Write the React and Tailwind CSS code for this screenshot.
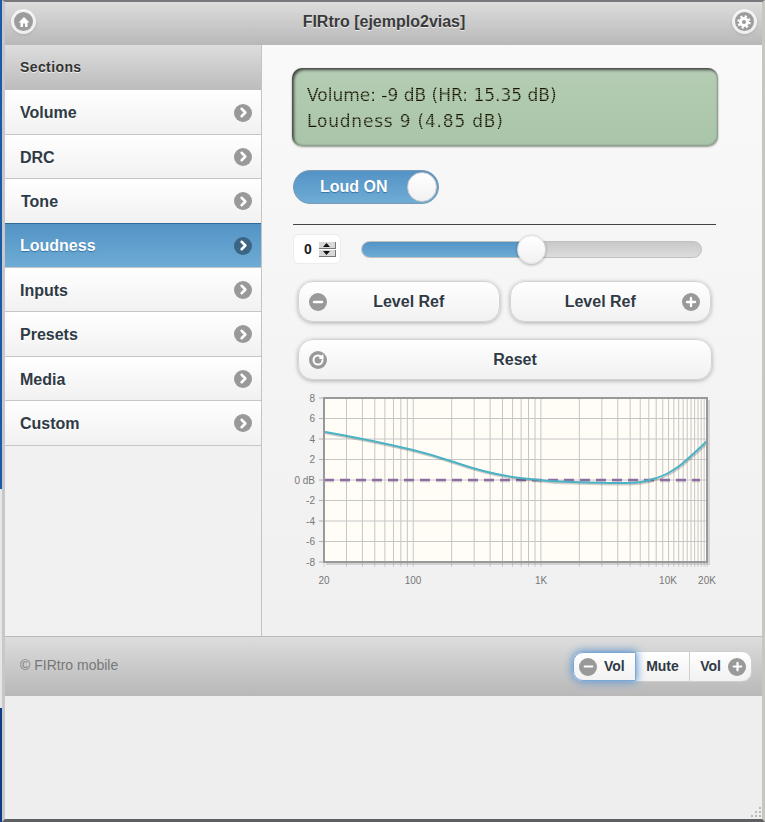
import { ChevronRight, Minus, Plus, RotateCw } from 'lucide-react'

const SECTIONS = ['Volume', 'DRC', 'Tone', 'Loudness', 'Inputs', 'Presets', 'Media', 'Custom']
const ROW_H = { Volume: 'h-[45px] pt-px', DRC: 'h-[44px]', Tone: 'h-[45px]', Loudness: 'h-[44px]', Inputs: 'h-[44px]', Presets: 'h-[45px]', Media: 'h-[44px]', Custom: 'h-[45px]' }

function IconDot({ children, dark }) {
  return (
    <span className={`flex h-[18px] w-[18px] flex-shrink-0 items-center justify-center rounded-full text-white ${dark ? 'bg-[#3b6485]' : 'bg-[#999999]'}`}>
      {children}
    </span>
  )
}

function HeadIcon({ children }) {
  return (
    <span className="flex h-[19px] w-[19px] items-center justify-center rounded-full bg-[#9c9c9c] text-white shadow-[0_0_0_3px_rgba(255,255,255,0.8),0_1px_3px_3px_rgba(0,0,0,0.1)]">
      {children}
    </span>
  )
}

function SectionRow({ label }) {
  const active = label === 'Loudness'
  const border = label === 'Tone' ? 'border-[#2f6a98]' : 'border-[#c6c6c6]'
  return (
    <div className={`flex ${ROW_H[label]} items-center justify-between border-b ${border} pl-[15px] pr-[9px] text-[16px] font-bold ${active ? 'bg-gradient-to-b from-[#5393c5] to-[#6facd5] text-white [text-shadow:0_1px_1px_#3373a5]' : 'bg-gradient-to-b from-white to-[#f1f1f1] text-[#2f3a45] [text-shadow:0_1px_0_#fff]'}`}>
      <span className={`${label === 'Tone' ? 'pl-px' : ''} ${active || label === 'Volume' ? '' : 'pt-[2px]'}`}>{label}</span>
      <IconDot dark={active}>
        <ChevronRight size={15} strokeWidth={4} />
      </IconDot>
    </div>
  )
}

function PillButton({ children, icon, side = 'left' }) {
  return (
    <div className={`relative flex h-[41px] flex-1 items-center justify-center rounded-[15px] border border-[#d4d4d4] bg-gradient-to-b from-white to-[#f1f1f1] text-[16px] font-bold text-[#2f3a45] shadow-[0_1px_4px_rgba(0,0,0,0.3)] [text-shadow:0_1px_0_#fff] ${side === 'left' ? 'pl-[20px]' : 'pr-[20px]'}`}>
      <span className={side === 'left' ? 'absolute left-[10px] top-[11px]' : 'absolute right-[10px] top-[11px]'}>
        <IconDot>{icon}</IconDot>
      </span>
      {children}
    </div>
  )
}

function StepArrow({ up }) {
  return (
    <span className="flex h-[7px] w-[17px] items-center justify-center border-b border-r border-[#777777] bg-[#d8d8d8]">
      <svg width="7" height="4" viewBox="0 0 7 4" fill="#111111"><path d={up ? 'M3.5 0 L7 4 H0 Z' : 'M0 0 H7 L3.5 4 Z'} /></svg>
    </span>
  )
}

// log frequency grid lines of the eq chart
const FREQS = [20, 30, 40, 50, 60, 70, 80, 90, 100, 200, 300, 400, 500, 600, 700, 800, 900, 1000, 2000, 3000, 4000, 5000, 6000, 7000, 8000, 9000, 10000, 11000, 12000, 13000, 14000, 15000, 16000, 17000, 18000, 19000, 20000]
const fx = f => (Math.log10(f / 20) / 3) * 383
const gy = d => 82 - d * 10.25

function EqChart() {
  const curve = 'M0 33.7 C30 39 60 45 89 52 C105 56 118 60 129 63.7 C150 71 172 77 196 80 C215 82.5 235 84 255 84.3 C275 85 290 85.3 303 85 C312 85 322 83.5 329 81 C336 79 341 77 346 74 C351 71 355 68.5 359 65 C367 58 375 51 383 43'
  return (
    <svg width="424" height="200" viewBox="-30 -8 424 200" className="block">
      <rect x="0" y="0" width="383" height="164" fill="#fffdf6" />
      {FREQS.map(f => <line key={f} x1={fx(f)} x2={fx(f)} y1="0" y2="164" stroke="#c6c6c6" strokeWidth="1" />)}
      {FREQS.map(f => <line key={`t${f}`} x1={fx(f)} x2={fx(f)} y1="164" y2="169" stroke="#d0d0d0" strokeWidth="1" />)}
      {[8, 6, 4, 2, 0, -2, -4, -6, -8].map(d => (
        <g key={d}>
          <line x1="0" x2="383" y1={gy(d)} y2={gy(d)} stroke="#c6c6c6" strokeWidth="1" />
          <line x1="-5" x2="0" y1={gy(d)} y2={gy(d)} stroke="#b0b0b0" strokeWidth="1" />
          <text x="-9" y={gy(d) + 3.5} textAnchor="end" fontSize="10" fontFamily="Liberation Sans" fill="#777777">{d === 0 ? '0 dB' : d}</text>
        </g>
      ))}
      <line x1="0" x2="376" y1="83.5" y2="83.5" stroke="#00000018" strokeWidth="2" strokeDasharray="10 6" />
      <line x1="0" x2="376" y1="82" y2="82" stroke="#8c6ea3" strokeWidth="2.5" strokeDasharray="10 6" />
      <path d={curve} fill="none" stroke="#00000030" strokeWidth="2" transform="translate(1 1.5)" />
      <path d={curve} fill="none" stroke="#4bb2c5" strokeWidth="2" />
      <path d="M385 2 V166 H2" fill="none" stroke="#00000020" strokeWidth="2" />
      <rect x="0" y="0" width="383" height="164" fill="none" stroke="#999999" strokeWidth="2" />
      {[['20', 0], ['100', 89], ['1K', 217], ['10K', 344], ['20K', 383]].map(([t, x]) => (
        <text key={t} x={x} y="186" textAnchor="middle" fontSize="10" fontFamily="Liberation Sans" fill="#777777">{t}</text>
      ))}
    </svg>
  )
}

export default function App() {
  return (
    <div className="flex h-[822px] w-[765px] overflow-hidden font-['Liberation_Sans',sans-serif]">
      {/* sliver of the window behind the frame */}
      <div className="flex w-[2px] flex-shrink-0 flex-col">
        <div className="h-[489px] bg-[#1a5aa8]" />
        <div className="h-[219px] bg-[#e6e6e6]" />
        <div className="flex-1 bg-[#0d3b8c]" />
      </div>
      <div className="flex min-w-0 flex-1 flex-col border-t-2 border-b-[3px] border-l-[3px] border-r-[3px] border-t-[#77797d] border-b-[#5d5f60] border-l-[#c8c8c8] border-r-[#c8c6c0] bg-[#eeeeee]">
        <header className="flex h-[43px] flex-shrink-0 items-center justify-between bg-gradient-to-b from-[#dddddd] to-[#b8b8b8] pb-[4px] pl-[9px] pr-[8px]">
          <HeadIcon>
            <svg width="12" height="12" viewBox="0 0 24 24" fill="currentColor"><path d="M12 2 L23 13 H19 V22 H14 V15 H10 V22 H5 V13 H1 Z" /></svg>
          </HeadIcon>
          <span className="text-[16px] font-bold text-[#3a3a3a] [text-shadow:0_1px_0_#eee]">FIRtro [ejemplo2vias]</span>
          <HeadIcon>
            <svg width="14" height="14" viewBox="0 0 24 24" fill="none" stroke="currentColor">
              <circle cx="12" cy="12" r="6" strokeWidth="5" />
              <circle cx="12" cy="12" r="9.5" strokeWidth="4" strokeDasharray="3.7 3.76" />
            </svg>
          </HeadIcon>
        </header>

        <div className="flex h-[592px] flex-shrink-0 border-b border-[#b9b9b9]">
          <nav className="w-[257px] flex-shrink-0 border-r border-[#c4c4c4] bg-[#f1f1f1]">
            <div className="flex h-[45px] items-center bg-gradient-to-b from-[#dddddd] to-[#bcbcbc] pl-[15px] text-[14px] font-bold tracking-[0.4px] text-[#333333] [text-shadow:0_1px_0_#eee]">Sections</div>
            {SECTIONS.map(s => <SectionRow key={s} label={s} />)}
          </nav>

          <main className="min-w-0 flex-1 bg-gradient-to-b from-[#f9f9f9] to-[#f0f0f0] pl-[30px] pr-[44px] pt-[23px]">
            <div className="flex h-[78px] flex-col justify-center gap-[3px] rounded-[10px] bg-gradient-to-b from-[#b4cdb4] to-[#a9c5a9] pl-[15px] pt-[2px] font-['DejaVu_Sans',sans-serif] text-[17px] leading-[23px] shadow-[inset_2px_2px_3px_#444,inset_-1px_-1px_2px_#8a9a8a,0_1px_2px_rgba(0,0,0,0.4)]">
              <div className="w-fit bg-[repeating-linear-gradient(180deg,#1a1505_0_1px,#5f6a4c_1px_2px)] bg-clip-text text-transparent">Volume: -9 dB (HR: 15.35 dB)</div>
              <div className="w-fit bg-[repeating-linear-gradient(180deg,#1a1505_0_1px,#5f6a4c_1px_2px)] bg-clip-text tracking-[0.8px] text-transparent">Loudness 9 (4.85 dB)</div>
            </div>

            <div className="ml-[1px] mt-[24px] flex h-[34px] w-[146px] items-center justify-between rounded-full border border-[#7b99b3] bg-gradient-to-b from-[#5393c5] to-[#6facd5] pl-[26px] pr-[1px] text-[16px] font-bold text-white [text-shadow:0_1px_1px_#3373a5]">
              Loud ON
              <span className="h-[30px] w-[30px] rounded-full border border-[#c8c8c8] bg-gradient-to-b from-white to-[#f1f1f1]" />
            </div>

            <hr className="ml-[1px] mr-[2px] mt-[20px] border-t border-[#444444]" />

            <div className="ml-[1px] mr-[16px] mt-[9px] flex items-center">
              <div className="flex h-[30px] w-[48px] items-center justify-center gap-[7px] rounded-[6px] border border-[#ececec] bg-white pl-[6px] text-[14px] font-bold text-[#222222]">
                0
                <span className="flex flex-col gap-px">
                  <StepArrow up />
                  <StepArrow />
                </span>
              </div>
              <div className="relative ml-[20px] h-[17px] flex-1 rounded-full border border-[#c0c0c0] bg-gradient-to-b from-[#c8c8c8] to-[#dddddd]">
                <div className="h-full w-[170px] rounded-full bg-gradient-to-b from-[#5393c5] to-[#6facd5]" />
                <span className="absolute left-[155px] top-[-7px] h-[29px] w-[29px] rounded-full border border-[#dddddd] bg-gradient-to-b from-white to-[#f1f1f1] shadow-[0_1px_3px_rgba(0,0,0,0.3)]" />
              </div>
            </div>

            <div className="ml-[6px] mr-[7px] mt-[17px] flex gap-[10px]">
              <PillButton icon={<Minus size={14} strokeWidth={4} />}>Level Ref</PillButton>
              <PillButton side="right" icon={<Plus size={14} strokeWidth={4} />}>Level Ref</PillButton>
            </div>
            <div className="ml-[6px] mr-[6px] mt-[17px] flex">
              <PillButton icon={<RotateCw size={12} strokeWidth={4} />}>Reset</PillButton>
            </div>

            <div className="ml-[2px] mt-[10px]">
              <EqChart />
            </div>
          </main>
        </div>

        <footer className="flex h-[59px] flex-shrink-0 items-center justify-between bg-gradient-to-b from-[#dddddd] to-[#b8b8b8] pl-[15px] pr-[10px]">
          <span className="mb-[2px] text-[14px] text-[#777777]">© FIRtro mobile</span>
          <div className="flex h-[31px] items-stretch rounded-[10px] border border-[#cfcfcf] bg-gradient-to-b from-white to-[#f1f1f1] text-[14px] font-bold text-[#2f3a45]">
            <div className="flex w-[63px] items-center gap-[7px] rounded-l-[10px] border border-[#7aa8d4] pl-[5px] shadow-[0_0_9px_1px_#5a94d0]">
              <IconDot><Minus size={13} strokeWidth={4} /></IconDot>Vol
            </div>
            <div className="flex w-[54px] items-center justify-center border-r border-[#cfcfcf]">Mute</div>
            <div className="flex w-[61px] items-center justify-end gap-[7px] pr-[5px]">
              Vol<IconDot><Plus size={13} strokeWidth={4} /></IconDot>
            </div>
          </div>
        </footer>

        <div className="relative flex-1 bg-[#eeeeee]">
          <div className="absolute bottom-[2px] right-[1px] grid grid-cols-3 gap-[2px]">
            {[0, 0, 1, 0, 1, 1, 1, 1, 1].map((on, i) => (
              <span key={i} className={`h-[2px] w-[2px] ${on ? 'bg-[#b8b8b8]' : ''}`} />
            ))}
          </div>
        </div>
      </div>
    </div>
  )
}
